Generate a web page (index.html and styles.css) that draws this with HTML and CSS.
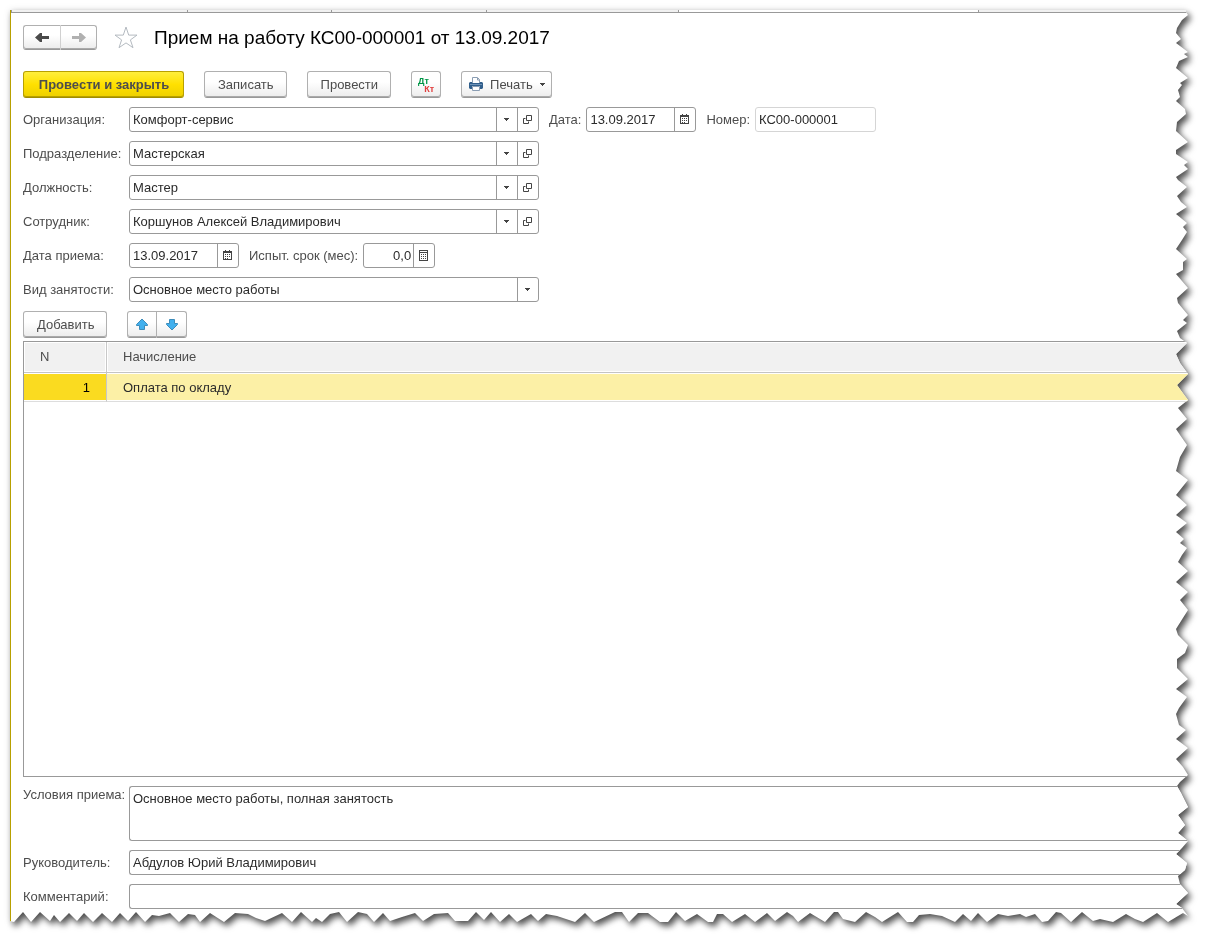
FILE: index.html
```html
<!DOCTYPE html>
<html lang="ru">
<head>
<meta charset="utf-8">
<title>Прием на работу КС00-000001 от 13.09.2017</title>
<link rel="stylesheet" href="styles.css">
</head>
<body>
<svg class="defs" aria-hidden="true">
  <symbol id="i-arrow" viewBox="0 0 6 5"><path d="M0 1h5v1H4v1H3v1H2V3H1V2H0z" fill="#444"/></symbol>
  <symbol id="i-open" viewBox="0 0 10 9"><path d="M3.500.5h5v5h-5zM2.500 3.500h-2v5h5v-2" fill="none" stroke="#444"/></symbol>
  <symbol id="i-cal" viewBox="0 0 10 11"><path d="M0 1h2V0h1v1h3V0h1v1h2v9H0zM1 3v6h7V3z" fill="#444" fill-rule="evenodd"/><path d="M2 4h1v1H2zM4 4h1v1H4zM6 4h1v1H6zM2 6h1v1H2zM4 6h1v1H4zM6 6h1v1H6zM2 8h1v1H2zM4 8h1v1H4z" fill="#444"/></symbol>
  <symbol id="i-calc" viewBox="0 0 10 11"><path d="M0 0h9v11H0zM1 1v1h7V1zM1 3v7h7V3z" fill="#444" fill-rule="evenodd"/><path d="M2 4h1v1H2zM4 4h1v1H4zM6 4h1v1H6zM2 6h1v1H2zM4 6h1v1H4zM6 6h1v1H6zM2 8h1v1H2zM4 8h1v1H4zM6 8h1v1H6z" fill="#444"/></symbol>
</svg>
<div class="shadow">
<main class="sheet">
  <div class="tabs"><i class="tab t1"></i><i class="tab t2"></i><i class="tab t3"></i><i class="tab t4"></i><i class="tab t5"></i><i class="tab t6"></i></div>
  <form class="form">
    <header class="head">
      <div class="group nav">
        <button type="button" class="btn" aria-label="Назад"><svg width="14" height="11"><path d="M0 5.500L5 1h2v3h7v3H7v3H5z" fill="#4a4a4a"/></svg></button>
        <button type="button" class="btn" aria-label="Вперед"><svg width="14" height="11"><path d="M14 5.500L9 1H7v3H0v3h7v3h2z" fill="#b0b0b0"/></svg></button>
      </div>
      <button type="button" class="star" aria-label="В избранное"><svg width="24" height="23" viewBox="0 0 24 23"><path d="M12 1l2.700 8.100h8.300l-6.600 4.800 2.600 7.800-7-4.800-7 4.800 2.600-7.800L1 9.100h8.300z" fill="#fff" stroke="#b4bac0"/></svg></button>
      <h1>Прием на работу КС00-000001 от 13.09.2017</h1>
    </header>

    <div class="bar">
      <button type="button" class="btn primary">Провести и закрыть</button>
      <button type="button" class="btn">Записать</button>
      <button type="button" class="btn">Провести</button>
      <button type="button" class="btn dtkt" aria-label="Движения документа"><span class="dt">Дт</span><span class="kt">Кт</span></button>
      <button type="button" class="btn print"><svg width="14" height="15" viewBox="0 0 14 15"><path d="M3.500 6V.5h5l2 2V6" fill="#fff" stroke="#8a9db3"/><path d="M8.500 1v2h2" fill="none" stroke="#8a9db3"/><path d="M1 5h2v1h8V5h2l1 1v5l-1 1h-2V9H3v3H1l-1-1V6z" fill="#315f8c"/><path d="M1 7.500h12" stroke="#6f93b8"/><path d="M3.500 9.500h7v4h-7z" fill="#fff" stroke="#8a9db3"/></svg>Печать<svg class="caret" width="6" height="5"><use href="#i-arrow"/></svg></button>
    </div>

    <div class="row">
      <label class="main" for="org">Организация:</label>
      <div class="field wide"><div class="pick"><select id="org"><option>Комфорт-сервис</option></select><span class="cell"><svg width="6" height="5"><use href="#i-arrow"/></svg></span></div><button type="button" class="cell" aria-label="Открыть"><svg width="10" height="9"><use href="#i-open"/></svg></button></div>
      <label for="date">Дата:</label>
      <div class="field date"><input id="date" value="13.09.2017"><button type="button" class="cell" aria-label="Календарь"><svg width="10" height="11"><use href="#i-cal"/></svg></button></div>
      <label for="num">Номер:</label>
      <div class="field number"><input id="num" value="КС00-000001" readonly></div>
    </div>
    <div class="row">
      <label class="main" for="dep">Подразделение:</label>
      <div class="field wide"><div class="pick"><select id="dep"><option>Мастерская</option></select><span class="cell"><svg width="6" height="5"><use href="#i-arrow"/></svg></span></div><button type="button" class="cell" aria-label="Открыть"><svg width="10" height="9"><use href="#i-open"/></svg></button></div>
    </div>
    <div class="row">
      <label class="main" for="pos">Должность:</label>
      <div class="field wide"><div class="pick"><select id="pos"><option>Мастер</option></select><span class="cell"><svg width="6" height="5"><use href="#i-arrow"/></svg></span></div><button type="button" class="cell" aria-label="Открыть"><svg width="10" height="9"><use href="#i-open"/></svg></button></div>
    </div>
    <div class="row">
      <label class="main" for="emp">Сотрудник:</label>
      <div class="field wide"><div class="pick"><select id="emp"><option>Коршунов Алексей Владимирович</option></select><span class="cell"><svg width="6" height="5"><use href="#i-arrow"/></svg></span></div><button type="button" class="cell" aria-label="Открыть"><svg width="10" height="9"><use href="#i-open"/></svg></button></div>
    </div>
    <div class="row">
      <label class="main" for="hired">Дата приема:</label>
      <div class="field date"><input id="hired" value="13.09.2017"><button type="button" class="cell" aria-label="Календарь"><svg width="10" height="11"><use href="#i-cal"/></svg></button></div>
      <label for="trial">Испыт. срок (мес):</label>
      <div class="field trial"><input id="trial" value="0,0"><button type="button" class="cell" aria-label="Калькулятор"><svg width="10" height="11"><use href="#i-calc"/></svg></button></div>
    </div>
    <div class="row">
      <label class="main" for="kind">Вид занятости:</label>
      <div class="field wide"><div class="pick"><select id="kind"><option>Основное место работы</option></select><span class="cell"><svg width="6" height="5"><use href="#i-arrow"/></svg></span></div></div>
    </div>

    <div class="bar list-bar">
      <button type="button" class="btn">Добавить</button>
      <div class="group move">
        <button type="button" class="btn" aria-label="Вверх"><svg width="12" height="13"><path d="M6 1l5.500 5.500v1H8.500v4h-5v-4H.5v-1z" fill="#42b0ee" stroke="#3d8cba"/></svg></button>
        <button type="button" class="btn" aria-label="Вниз"><svg width="12" height="13"><path d="M6 12l5.500-5.500v-1H8.500v-4h-5v4H.5v1z" fill="#42b0ee" stroke="#3d8cba"/></svg></button>
      </div>
    </div>
    <div class="list">
      <table>
        <thead><tr><th class="n">N</th><th>Начисление</th></tr></thead>
        <tbody><tr><td class="n">1</td><td>Оплата по окладу</td></tr></tbody>
      </table>
    </div>

    <div class="row top">
      <label class="main" for="terms">Условия приема:</label>
      <div class="field fill"><textarea id="terms">Основное место работы, полная занятость</textarea></div>
    </div>
    <div class="row">
      <label class="main" for="boss">Руководитель:</label>
      <div class="field fill"><input id="boss" value="Абдулов Юрий Владимирович"></div>
    </div>
    <div class="row">
      <label class="main" for="note">Комментарий:</label>
      <div class="field fill"><input id="note"></div>
    </div>
  </form>
</main>
</div>
<script src="edge.js"></script>
</body>
</html>
```
FILE: styles.css
```css
* { box-sizing: border-box; }

body {
  margin: 0;
  background: #fff;
  color: #4d4d4d;
  font: 13px/16px "Liberation Sans", Arial, sans-serif;
}

button, input, select, textarea {
  margin: 0;
  padding: 0;
  border: 0;
  background: none;
  color: inherit;
  font: inherit;
}

svg { display: block; flex: none; }
.defs { display: none; }

.shadow {
  display: flex;
  min-height: 100vh;
  padding: 10px 17px 18px 10px;
  filter: drop-shadow(3px 4px 3px rgba(0, 0, 0, .65)) drop-shadow(0 0 3px rgba(0, 0, 0, .12));
}

.sheet {
  display: flex;
  flex: 1;
  flex-direction: column;
  min-width: 0;
  overflow: hidden;
  border-left: 1px solid #b8a000;
  background: #fff;
}

.tabs {
  display: flex;
  height: 3px;
  border-bottom: 1px solid #999;
  background: #f1f1f1;
}
.tab { border-right: 1px solid #999; }
.t1 { width: 1px; }
.t2 { width: 176px; }
.t3 { width: 144px; }
.t4 { width: 155px; }
.t5 { width: 192px; }
.t6 { width: 300px; background: #fff; }

.form {
  display: flex;
  flex: 1;
  flex-direction: column;
  gap: 9px;
  padding: 12px 0 13px 12px;
}

.head {
  display: flex;
  align-items: center;
  height: 25px;
  margin-bottom: 12px;
}
.star { margin: 0 16px 0 17px; }
h1 {
  margin: 0;
  color: #000;
  font-size: 19px;
  font-weight: 400;
  line-height: 25px;
}

.btn {
  display: flex;
  align-items: center;
  justify-content: center;
  height: 27px;
  padding: 0 12px 0 13px;
  border: 1px solid #b0b0b0;
  border-bottom-color: #999;
  border-radius: 3px;
  background: linear-gradient(#fff 40%, #ececec);
  box-shadow: inset 0 -1px #aaa;
  line-height: 15px;
}
.primary {
  width: 161px;
  border-color: #b8a000;
  border-bottom-color: #a08c00;
  background: linear-gradient(#ffee3c, #ffe000 50%, #eed000);
  box-shadow: inset 0 -1px #b8a000;
  font-weight: 700;
}
.group { display: flex; }
.group .btn { padding: 0; }
.group .btn:first-child { border-radius: 3px 0 0 3px; }
.group .btn:last-child { border-left: 0; border-radius: 0 3px 3px 0; }
.nav .btn { width: 36px; height: 25px; }
.nav .btn:first-child { width: 38px; border-right-color: #d0d0d0; }
.move .btn { width: 30px; }

.bar { display: flex; gap: 20px; }
.dtkt {
  flex-direction: column;
  width: 30px;
  padding: 0 6px;
  font: 700 9px/8px "Liberation Sans", Arial, sans-serif;
}
.dt { align-self: flex-start; color: #009646; }
.kt { align-self: flex-end; color: #e03c3c; }
.print { gap: 7px; padding: 0 5px 0 7px; }

.row { display: flex; align-items: center; gap: 5px; }
.row .main { flex: none; width: 101px; white-space: nowrap; }
.field + label { margin-left: 5px; }
.row.top { align-items: flex-start; }
.row.top .main { padding-top: 1px; }

.field {
  display: flex;
  height: 25px;
  border: 1px solid #999;
  border-radius: 3px;
  background: #fff;
  color: #2b2b2b;
}
.wide { width: 410px; }
.date { width: 110px; }
.trial { width: 72px; }
.trial input { padding-right: 2px; text-align: right; }
.number { width: 121px; border-color: #d5d5d5; }
.fill {
  flex: 1;
  border-right: 0;
  border-radius: 3px 0 0 3px;
}
.top .fill { height: 55px; }

.field input, .field textarea {
  flex: 1;
  width: 100%;
  min-width: 0;
  padding-left: 3px;
  outline: 0;
}
.field textarea { padding-top: 4px; resize: none; }

.pick {
  display: grid;
  flex: 1;
  grid-template-columns: 1fr 21px;
}
.pick select {
  grid-area: 1 / 1 / 2 / 3;
  padding-left: 3px;
  outline: 0;
  appearance: none;
}
.pick .cell { grid-area: 1 / 2; pointer-events: none; }
.cell {
  display: flex;
  flex: none;
  align-items: center;
  justify-content: center;
  width: 21px;
  border-left: 1px solid #999;
}

.list-bar { margin-bottom: -6px; }
.list {
  flex: 1;
  min-height: 100px;
  border: 1px solid #999;
  border-right: 0;
}
table {
  width: 100%;
  border-collapse: separate;
  border-spacing: 0;
}
th, td {
  padding: 0 16px;
  border-bottom: 1px solid #ddd;
  text-align: left;
}
th {
  height: 31px;
  border-bottom-color: #c4c4c4;
  background: #f1f1f1;
  box-shadow: inset 0 0 0 1px #fff;
  font-weight: 400;
}
td {
  height: 29px;
  padding-top: 2px;
  background: #fcf0a6;
  box-shadow: inset 0 1px #fff, inset 0 -1px #fff;
  color: #2b2b2b;
}
.n { width: 83px; border-right: 1px solid #c8c8c8; }
td.n { background: #fadb20; color: #000; text-align: right; }
```
FILE: edge.js
```js
// Torn right edge: [y from top, depth from the right side].
const right = [
  [2,2],[5,0],[10,6],[18,11],[23,12],[29,7],[33,12],[42,0],[44,4],[47,0],[51,9],[58,12],[68,0],[73,8],[75,6],[80,10],[87,8],[91,12],
  [99,3],[104,2],[112,11],[121,12],[132,0],[140,12],[144,12],[152,0],[155,4],[159,0],[167,12],[170,10],[177,1],[186,11],[192,7],[197,1],
  [204,12],[213,1],[217,5],[222,1],[230,6],[239,12],[249,1],[252,5],[260,5],[264,12],[278,0],[288,11],[293,10],[305,0],[310,5],[313,1],
  [321,11],[328,8],[333,1],[344,12],[353,8],[364,0],[375,11],[386,3],[390,0],[398,10],[409,1],[419,12],[425,8],[435,1],[447,8],[461,12],
  [470,0],[485,12],[495,1],[505,12],[513,1],[522,12],[529,4],[533,8],[538,1],[545,6],[552,10],[561,0],[572,12],[582,0],[590,8],[600,0],
  [619,12],[625,10],[635,0],[643,3],[649,11],[658,11],[669,0],[679,12],[687,1],[698,9],[704,12],[715,9],[720,2],[729,12],[738,0],[749,12],
  [757,5],[765,0],[772,8],[776,11],[783,7],[797,0],[805,10],[815,3],[823,10],[831,0],[838,6],[844,12],[853,1],[860,3],[866,10],[874,8],
  [883,0],[894,12],[898,6],[906,0]
];
// Torn bottom edge: [x from left, depth from the bottom side].
const bottom = [
  [0,1],[4,0],[13,10],[21,0],[30,10],[40,1],[44,7],[50,0],[59,9],[67,1],[74,9],[83,0],[92,9],[102,0],[110,9],[118,1],[126,10],[135,0],
  [142,7],[149,6],[160,9],[169,0],[178,8],[185,7],[190,0],[200,9],[214,0],[225,9],[238,8],[246,4],[255,1],[272,9],[282,0],[291,10],[302,0],
  [306,4],[312,0],[320,8],[329,10],[337,0],[348,10],[357,8],[364,0],[373,9],[380,1],[392,5],[405,9],[413,1],[424,8],[438,9],[445,1],
  [458,1],[466,10],[474,2],[481,10],[490,0],[499,8],[507,0],[521,8],[528,1],[536,8],[547,6],[565,0],[575,9],[584,0],[605,10],[612,10],
  [619,0],[628,9],[638,9],[650,0],[658,0],[666,10],[675,1],[687,8],[698,0],[703,0],[707,8],[713,8],[722,0],[735,8],[745,0],[757,9],
  [765,1],[777,10],[783,6],[788,0],[800,9],[815,0],[824,10],[828,10],[833,3],[845,0],[856,10],[865,5],[872,0],[888,10],[897,0],[903,0],
  [909,7],[920,8],[932,6],[945,0],[953,8],[961,1],[968,9],[977,0],[988,8],[998,6],[1010,8],[1016,5],[1025,8],[1032,0],[1038,1],
  [1046,10],[1051,9],[1061,0],[1072,10],[1083,1],[1090,3],[1103,0],[1116,8],[1125,3],[1133,0],[1147,9],[1158,0],[1173,9]
];

const sheet = document.querySelector(".sheet");
function tear() {
  const w = sheet.offsetWidth, h = sheet.offsetHeight;
  const points = [[0, 0], [w - 2, 0]];
  for (const [y, d] of right) if (y < h - 4) points.push([w - d, y]);
  for (const [x, d] of [...bottom].reverse()) if (x < w - 4) points.push([x, h - d]);
  sheet.style.clipPath = "polygon(" + points.map(([x, y]) => x + "px " + y + "px").join(",") + ")";
}
tear();
addEventListener("resize", tear);
```
